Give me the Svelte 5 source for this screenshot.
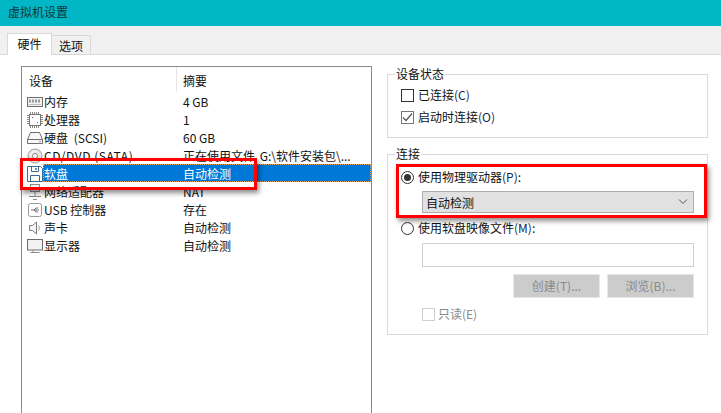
<script>
  const rows = [
    { icon: "ram", name: "内存", value: "4 GB" },
    { icon: "cpu", name: "处理器", value: "1" },
    { icon: "disk", name: "硬盘 (SCSI)", value: "60 GB", spaced: true },
    { icon: "cd", name: "CD/DVD (SATA)", value: "正在使用文件 G:\\软件安装包\\...", wide: true },
    { icon: "floppy", name: "软盘", value: "自动检测", selected: true },
    { icon: "net", name: "网络适配器", value: "NAT" },
    { icon: "usb", name: "USB 控制器", value: "存在" },
    { icon: "sound", name: "声卡", value: "自动检测" },
    { icon: "display", name: "显示器", value: "自动检测" }
  ];
</script>

<div class="window">
  <div class="titlebar">虚拟机设置</div>

  <div class="tabs">
    <div class="tab active">硬件</div>
    <div class="tab">选项</div>
  </div>

  <div class="panel">
    <div class="list">
      <div class="list-head">
        <div class="col-name">设备</div>
        <div class="col-value">摘要</div>
      </div>
      {#each rows as row}
        <div class="row" class:selected={row.selected} class:spaced={row.spaced} class:wide={row.wide}>
          <svg class="icon" width="16" height="16" viewBox="0 0 16 16" fill="none" stroke="#6d6d6d">
            {#if row.icon === "ram"}
              <rect x="0.5" y="3.5" width="15" height="9" fill="#f2f2f2" />
              <path d="M2 7h12" stroke="#9a9a9a" stroke-width="3" stroke-dasharray="2 1" />
              <path d="M2 10.5h12" stroke="#bdbdbd" />
            {:else if row.icon === "cpu"}
              <rect x="2.5" y="2.5" width="11" height="11" fill="#fff" stroke="#777" />
              <path d="M3 1h10M3 15h10M1 3v10M15 3v10" stroke="#8a8a8a" stroke-width="2" stroke-dasharray="1 1" />
              <path d="M5 5h1v1H5zM10 10h1v1h-1z" fill="#555" stroke="none" />
            {:else if row.icon === "disk"}
              <path d="M3.5 2.5h9l3 7v4h-15v-4z" fill="#f8f8f8" />
              <path d="M0.5 9.5h15" />
              <path d="M12 11.5h2" stroke="#999" />
            {:else if row.icon === "cd"}
              <circle cx="8" cy="8" r="7" fill="#e6e6e6" stroke="#9c9c9c" />
              <circle cx="8" cy="8" r="2.5" fill="#fff" stroke="#8a8a8a" />
              <path d="M3.5 8a4.5 4.5 0 0 1 4.5-4.5" stroke="#fff" />
            {:else if row.icon === "floppy"}
              <path d="M0.5 0.5h13l2 2v13h-15z" fill="#fff" stroke="#3f6a90" />
              <path d="M4.5 0.5v5h7v-5M3.5 15.5v-6h9v6" stroke="#3f6a90" />
              <path d="M9 2v2" stroke="#3f6a90" stroke-width="1.5" />
            {:else if row.icon === "net"}
              <rect x="3.5" y="0.5" width="9" height="7" fill="#f2f2f2" stroke="#8a8a8a" />
              <path d="M8 8v4M2 12.5h12M6 15.5h4" stroke="#8a8a8a" />
            {:else if row.icon === "usb"}
              <rect x="1.5" y="1.5" width="13" height="13" rx="2" stroke="#9a9a9a" />
              <path d="M4 8h8M7 8l2-2h2M7 8l2 2h2" stroke="#6d6d6d" />
            {:else if row.icon === "sound"}
              <path d="M2.5 5.5h3l4-3.5v12l-4-3.5h-3z" fill="#f4f4f4" stroke="#7a7a7a" />
              <path d="M11.5 5.5c1 1.5 1 3.5 0 5" stroke="#9a9a9a" />
            {:else if row.icon === "display"}
              <rect x="0.5" y="1.5" width="15" height="10.5" fill="#f2f2f2" />
              <path d="M6 12.5v2M3.5 14.5h9" stroke="#8a8a8a" />
            {/if}
          </svg>
          <div class="col-name">{row.name}</div>
          <div class="col-value">{row.value}</div>
        </div>
      {/each}
    </div>

    <div class="side">
      <fieldset class="group status">
        <legend>设备状态</legend>
        <label class="opt"><span class="box"></span><span>已连接<span class="key">(C)</span></span></label>
        <label class="opt">
          <span class="box checked">
            <svg width="11" height="11" viewBox="0 0 11 11" fill="none" stroke="#555" stroke-width="1.2"><path d="M1 5.5l3 3 6-7" /></svg>
          </span>
          <span>启动时连接<span class="key">(O)</span></span>
        </label>
      </fieldset>

      <fieldset class="group connect">
        <legend>连接</legend>
        <label class="opt"><span class="radio on"></span><span>使用物理驱动器<span class="key">(P)</span>:</span></label>
        <div class="combo">
          <span>自动检测</span>
          <svg width="10" height="6" viewBox="0 0 10 6" fill="none" stroke="#555"><path d="M1 0.5l4 4 4-4" /></svg>
        </div>
        <label class="opt second"><span class="radio"></span><span>使用软盘映像文件<span class="key">(M)</span>:</span></label>
        <div class="textbox"></div>
        <div class="buttons">
          <div class="btn">创建(T)...</div>
          <div class="btn">浏览(B)...</div>
        </div>
        <label class="opt readonly"><span class="box"></span><span>只读(E)</span></label>
      </fieldset>
    </div>
  </div>

  <div class="mark mark-row"></div>
  <div class="mark mark-drive"></div>
</div>

<style>
  :global(body) {
    margin: 0;
  }

  .window {
    position: relative;
    width: 721px;
    height: 413px;
    overflow: hidden;
    display: flex;
    flex-direction: column;
    background: #f0f0f0;
    color: #111;
    font-family: "Noto Sans CJK SC", "Noto Sans", sans-serif;
    font-size: 12px;
    line-height: 16px;
  }

  .titlebar {
    height: 26px;
    flex: none;
    padding-left: 8px;
    line-height: 23px;
    background: #01b6c5;
    color: #12343a;
  }

  .tabs {
    height: 21px;
    flex: none;
    margin-top: 7px;
    padding-left: 7px;
    display: flex;
    align-items: flex-end;
  }

  .tab {
    width: 39px;
    height: 19px;
    box-sizing: border-box;
    border: 1px solid #d9d9d9;
    border-bottom: none;
    border-left: none;
    text-align: center;
    line-height: 20px;
  }

  .tab.active {
    width: 45px;
    height: 22px;
    background: #fff;
    line-height: 20px;
    position: relative;
    top: 1px;
    border-left: 1px solid #d9d9d9;
    z-index: 1;
  }

  .panel {
    flex: 1;
    display: flex;
    gap: 15px;
    padding: 11px 0 0 21px;
    background: #fff;
    border-top: 1px solid #d9d9d9;
  }

  .list {
    width: 351px;
    flex: none;
    box-sizing: border-box;
    border: 1px solid #8a8a8a;
    border-bottom: none;
  }

  .list-head {
    height: 26px;
    display: flex;
  }

  .list-head .col-name {
    width: 155px;
    height: 25px;
    box-sizing: border-box;
    padding-left: 7px;
    border-right: 1px solid #e5e5e5;
    line-height: 27px;
  }

  .list-head .col-value {
    padding-left: 6px;
    line-height: 27px;
  }

  .row {
    height: 18px;
    display: flex;
    align-items: center;
    padding-left: 5px;
    white-space: nowrap;
  }

  .icon {
    flex: none;
    background: #fff;
  }

  .row .col-name {
    width: 140px;
    box-sizing: border-box;
    padding-left: 1px;
    flex: none;
  }

  .row.spaced .col-name {
    word-spacing: 3px;
  }

  .row.wide .col-name {
    letter-spacing: 0.55px;
  }

  .row.wide .col-value {
    word-spacing: 2px;
  }

  .row.selected {
    position: relative;
    height: 16px;
    margin: -1px 0 1px;
    padding-top: 2px;
    background: linear-gradient(to right, #fff 21px, #0078d7 21px);
    color: #fff;
  }

  .row.selected::after {
    content: "";
    position: absolute;
    inset: 0 0 0 21px;
    border: 1px dotted #e8a050;
  }

  .side {
    width: 321px;
    flex: none;
    padding-top: 7px;
  }

  .group {
    margin: 0 0 16px;
    padding: 0;
    border: 1px solid #d9d9d9;
    box-sizing: border-box;
    min-inline-size: 0;
  }

  legend {
    margin-left: -6px;
    padding: 0 1px;
    line-height: 16px;
  }

  .status {
    height: 72px;
    padding: 2px 0 0 13px;
    margin-top: -7px;
  }

  .connect {
    height: 189px;
    padding: 4px 13px 0 13px;
    margin-top: -8px;
  }

  .opt {
    display: flex;
    align-items: center;
    height: 22px;
    gap: 4px;
    white-space: nowrap;
  }

  .key {
    color: #14284e;
  }

  .box {
    width: 11px;
    height: 11px;
    flex: none;
    border: 1px solid #333;
    display: flex;
    align-items: center;
    justify-content: center;
  }

  .box.checked {
    border-color: #777;
  }

  .radio {
    width: 11px;
    height: 11px;
    flex: none;
    border: 1px solid #333;
    border-radius: 50%;
    position: relative;
  }

  .radio.on::after {
    content: "";
    position: absolute;
    inset: 2px;
    border-radius: 50%;
    background: #333;
  }

  .combo {
    height: 22px;
    margin: 3px 0 0 21px;
    padding: 0 4px 0 3px;
    box-sizing: border-box;
    display: flex;
    align-items: center;
    justify-content: space-between;
    background: #e1e1e1;
    border: 1px solid #adadad;
  }

  .combo span {
    padding-top: 2px;
  }

  .combo svg {
    margin-right: 1px;
  }

  .second {
    margin-top: 4px;
  }

  .textbox {
    height: 24px;
    box-sizing: border-box;
    margin: 4px 0 0 21px;
    border: 1px solid #d0d0d0;
  }

  .buttons {
    display: flex;
    justify-content: flex-end;
    gap: 7px;
    margin-top: 7px;
  }

  .btn {
    width: 87px;
    height: 24px;
    box-sizing: border-box;
    border: 1px solid #e6e6e6;
    background: #cccccc;
    color: #8a8a8a;
    text-align: center;
    line-height: 22px;
  }

  .readonly {
    margin: 5px 0 0 21px;
    color: #8a8a8a;
    gap: 3px;
  }

  .readonly .box {
    border-color: #cfcfcf;
  }

  .mark {
    position: absolute;
    box-sizing: border-box;
    border: 3px solid #f00;
    box-shadow: 2px 3px 5px rgba(0, 0, 0, 0.45);
  }

  .mark-row {
    left: 20px;
    top: 158px;
    width: 237px;
    height: 32px;
  }

  .mark-drive {
    left: 396px;
    top: 164px;
    width: 311px;
    height: 54px;
  }
</style>
